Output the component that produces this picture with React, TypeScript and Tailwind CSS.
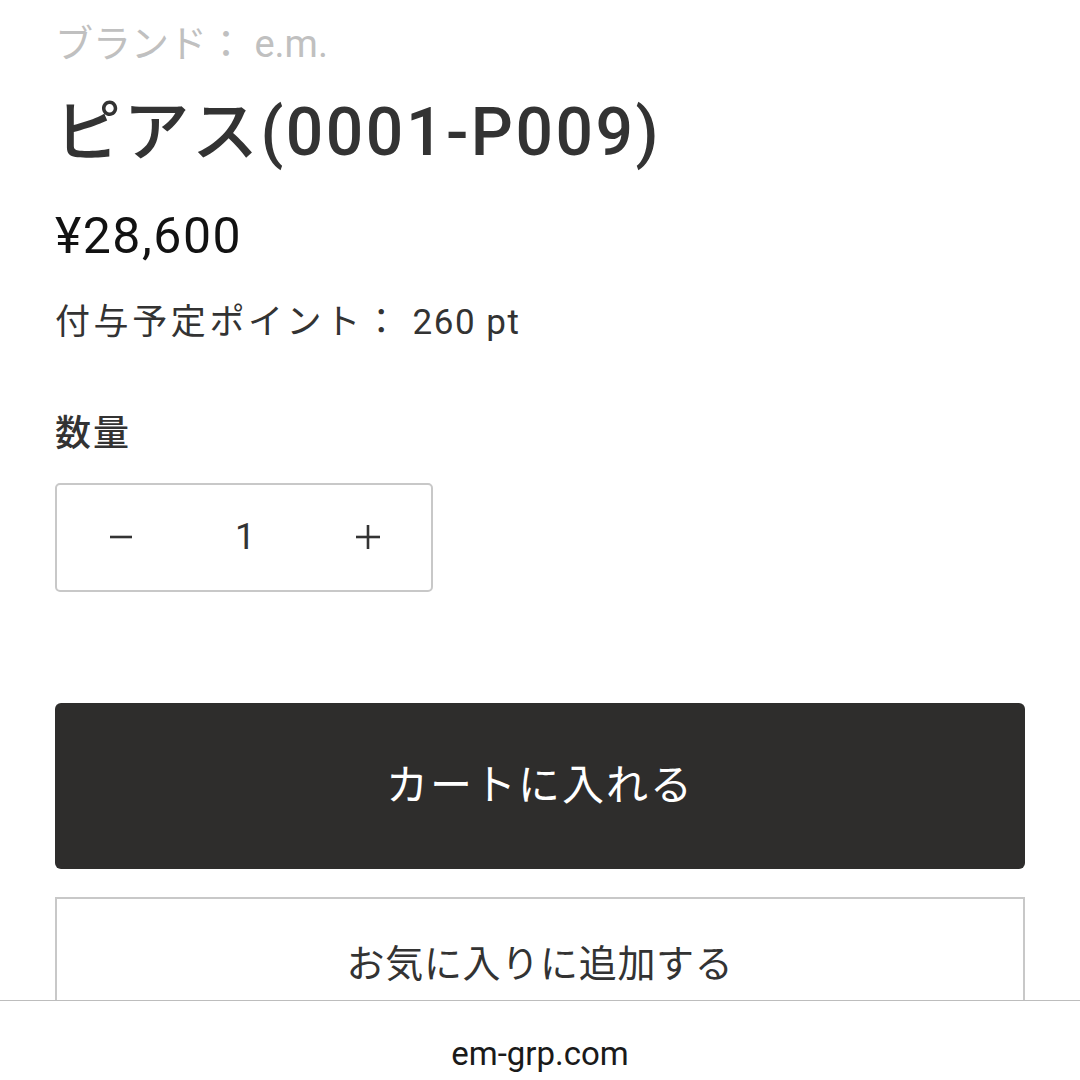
import { useState } from "react";

const font = {
  fontFamily: 'Roboto, "Noto Sans CJK JP", sans-serif',
};

export default function App() {
  const [qty, setQty] = useState(1);

  return (
    <div className="w-[1080px] h-[1080px] flex flex-col bg-white overflow-hidden" style={font}>
      <div className="h-[1000px] overflow-hidden px-[55px]">
        <p className="pt-[22px] text-[38px] leading-[1.2] text-[#c0c0c0]">ブランド： e.m.</p>

        <h1 className="mt-[25px] text-[66px] leading-[1.2] font-medium tracking-[2.5px] text-[#333333]">
          ピアス(0001-P009)
        </h1>

        <p className="mt-[34px] text-[50px] leading-[1.2] tracking-[1.5px] text-[#121212]">¥28,600</p>

        <p className="mt-[36px] text-[35px] leading-[1.2] text-[#333333]">
          <span className="tracking-[3.6px]">付与予定ポイント：</span>
          <span className="tracking-[1.5px]"> 260 pt</span>
        </p>

        <p className="mt-[69px] text-[36px] leading-[1.2] font-medium tracking-[2px] text-[#333333]">数量</p>

        <div className="mt-[27px] w-[378px] h-[109px] border-2 border-[#c8c8c8] rounded-[5px] flex items-center text-[36px] text-[#333333]">
          <button
            className="w-[128px] h-full flex items-center justify-center"
            onClick={() => setQty(Math.max(1, qty - 1))}
          >
            <svg width="24" height="24" viewBox="0 0 24 24">
              <line x1="1" y1="12" x2="23" y2="12" stroke="#333" strokeWidth="2.6" />
            </svg>
          </button>
          <span className="flex-1 text-center">{qty}</span>
          <button
            className="w-[126px] h-full flex items-center justify-center"
            onClick={() => setQty(qty + 1)}
          >
            <svg width="26" height="26" viewBox="0 0 26 26">
              <line x1="1" y1="13" x2="25" y2="13" stroke="#333" strokeWidth="2.6" />
              <line x1="13" y1="1" x2="13" y2="25" stroke="#333" strokeWidth="2.6" />
            </svg>
          </button>
        </div>

        <button className="mt-[111px] w-full h-[166px] rounded-[6px] bg-[#2e2d2c] text-white text-[42px] tracking-[2px] flex items-center justify-center">
          カートに入れる
        </button>

        <button className="mt-[28px] w-full h-[136px] border-2 border-[#c8c8c8] text-[#333333] text-[38px] tracking-[0.7px] flex items-center justify-center">
          お気に入りに追加する
        </button>
      </div>

      <div className="h-[80px] border-t border-[#bdbdbd] flex items-center justify-center">
        <span className="text-[33px] text-[#1a1a1a] pt-[26px]">em-grp.com</span>
      </div>
    </div>
  );
}
